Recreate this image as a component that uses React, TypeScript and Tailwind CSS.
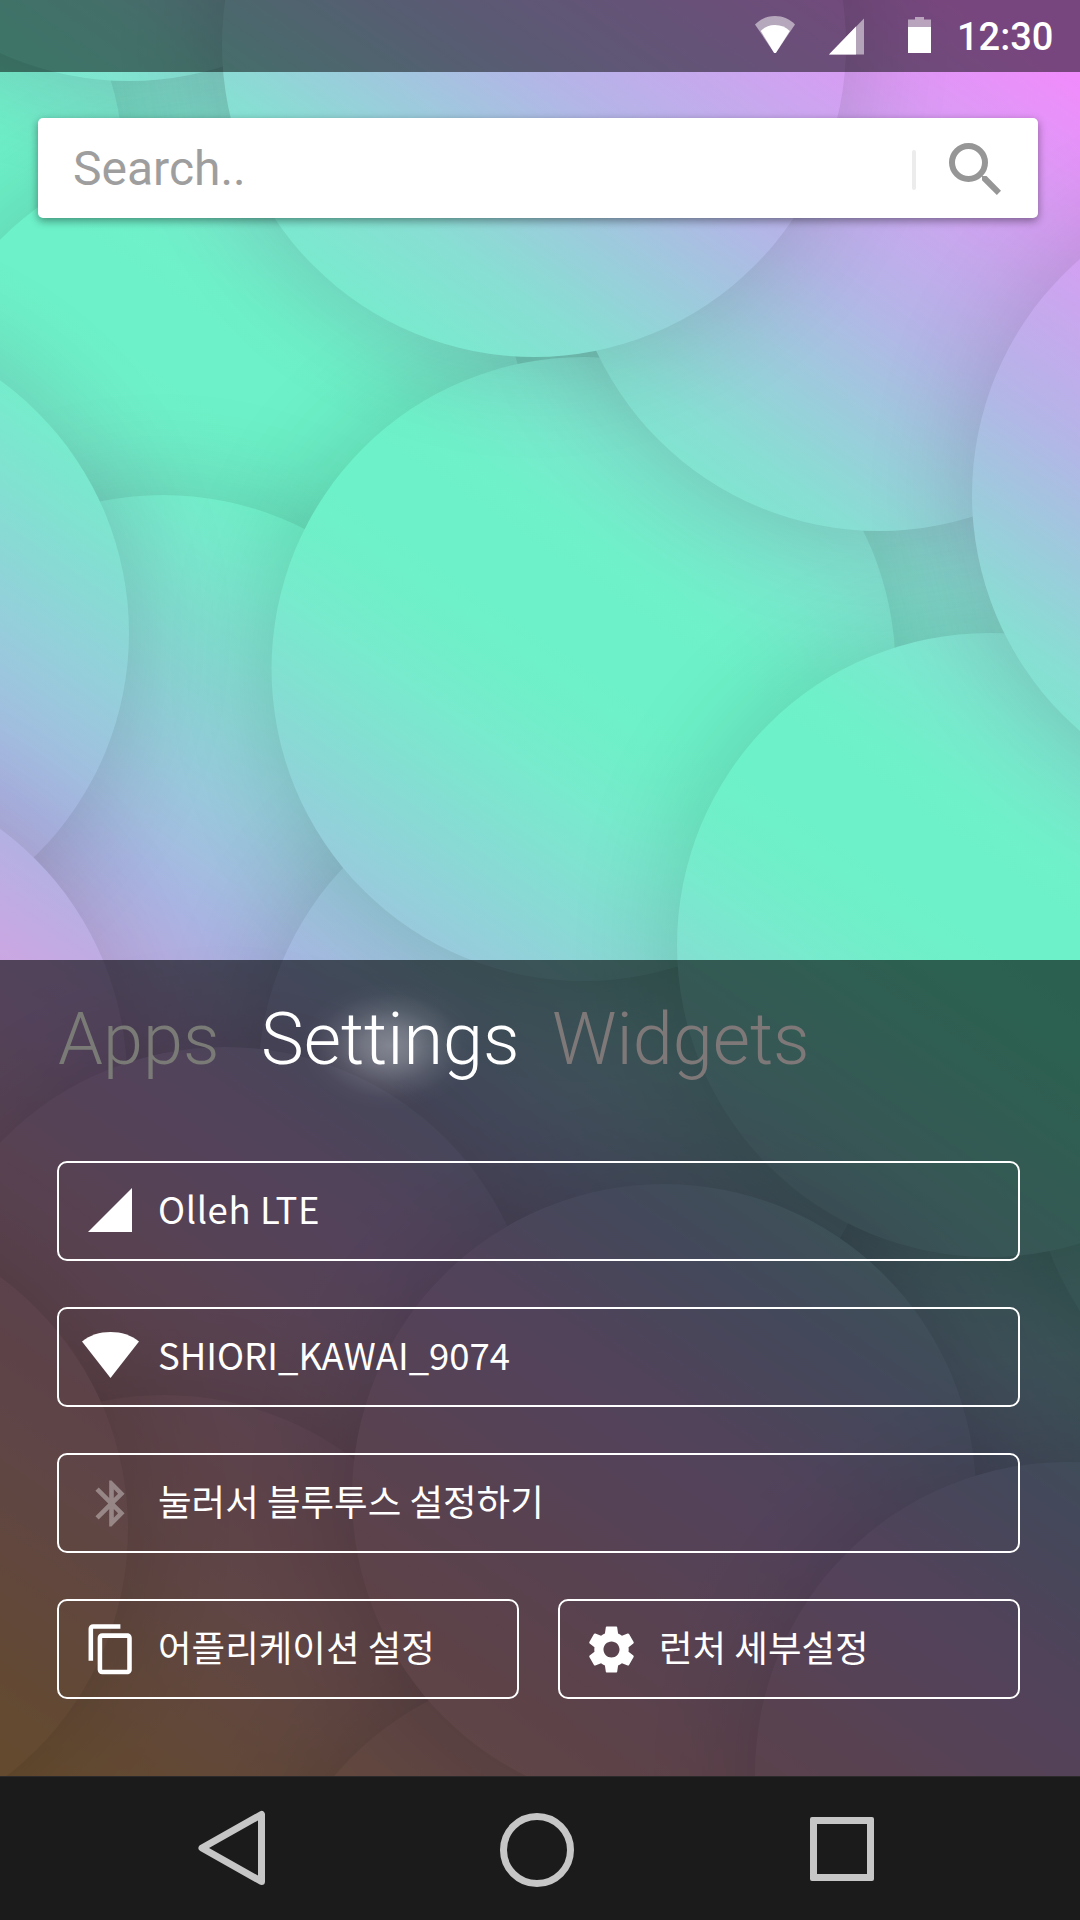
import React from "react";
import { MdBluetooth, MdContentCopy } from "react-icons/md";

const KR = "font-['Noto_Sans_CJK_KR',sans-serif]";

// Wallpaper discs, back to front.
const DISCS: [number, number][] = [
  [-188, 170],
  [221, 460],
  [129, -231],
  [163, 807],
  [1069, 1319],
  [1341, 1140],
  [570, 1082],
  [583.5, 669],
  [879, 219],
  [534, 45],
  [989, 945],
  [1284, 495],
  [-183, 633],
  [-185, 1080],
  [225, 1359],
  [164, 1707],
  [-184, 1529],
  [572, 1978],
  [664, 1496],
  [1067, 1774],
];

const STOPS: [number, string][] = [
  [-662, "#f08cfc"],
  [-300, "#b4b5e7"],
  [-65, "#88ded3"],
  [33, "#7ce8cf"],
  [130, "#6ff0c9"],
  [180, "#6df1c8"],
  [260, "#6df1c8"],
  [330, "#70efc9"],
  [400, "#78eacd"],
  [484, "#82e0d1"],
  [620, "#95cedb"],
  [780, "#a9b5e2"],
  [936, "#c8a8e2"],
  [1000, "#d0a6e2"],
  [1300, "#e6a5b8"],
  [1450, "#efaeab"],
  [1700, "#f8b87c"],
  [1800, "#fbbb70"],
];

function Wallpaper() {
  return (
    <svg className="absolute inset-0" width="1080" height="1920" viewBox="0 0 1080 1920" aria-hidden="true">
      <defs>
        <linearGradient id="sky" gradientUnits="userSpaceOnUse" x1="0" y1="-700" x2="-1168.6" y2="993.6">
          {STOPS.map(([t, c]) => (
            <stop key={t} offset={(t + 700) / 2500} stopColor={c} />
          ))}
        </linearGradient>
        <filter id="soft" x="-40%" y="-40%" width="180%" height="180%">
          <feGaussianBlur stdDeviation="58" />
        </filter>
      </defs>
      <rect width="1080" height="1920" fill="url(#sky)" />
      {DISCS.map(([x, y], i) => (
        <g key={i}>
          <circle cx={x} cy={y} r="312" fill="#000" opacity="0.15" filter="url(#soft)" />
          <circle cx={x} cy={y} r="312" fill="url(#sky)" />
        </g>
      ))}
    </svg>
  );
}

function StatusBar() {
  return (
    <header className="flex h-[72px] w-full items-start bg-black/50 pl-[755px] text-white">
      <svg className="mt-4" width="40" height="37" viewBox="0 0 40 37">
        <path d="M0 8.5C5 3.2 12 0 20 0s15 3.2 20 8.5L20.8 37h-1.6z" fill="#fff" fillOpacity=".5" />
        <path d="M5.8 15C9.5 11 14 9 20 9S31 11 34.8 15L20.8 37h-1.6z" fill="#fff" />
      </svg>
      <svg className="mt-[18px] ml-[34px]" width="35" height="37" viewBox="0 0 35 37">
        <path d="M0 36.5L35 .5v36z" fill="#fff" fillOpacity=".5" />
        <path d="M0 36.5L27 8.5v28z" fill="#fff" />
      </svg>
      <svg className="mt-[17px] ml-11" width="23" height="36" viewBox="0 0 23 36">
        <path d="M0 2.5h7V0h9v2.5h7V10H0z" fill="#fff" fillOpacity=".5" />
        <path d="M0 10h23v26H0z" fill="#fff" />
      </svg>
      <span className="mt-[15px] ml-[26px] font-[Roboto] text-[38px] leading-[45px] font-medium">12:30</span>
    </header>
  );
}

function SearchBar() {
  return (
    <div className="mt-[46px] ml-[38px] flex h-[100px] w-[1000px] items-center rounded-[5px] bg-white pl-[35px] shadow-[0_3px_9px_rgba(0,0,0,0.4)]">
      <span className="w-[839px] pt-0.5 font-[Roboto] text-[48px] leading-[56px] text-[#9e9e9e]">Search..</span>
      <span className="mt-1 h-10 w-1 rounded-full bg-[#ececec]" />
      <svg className="mt-1 ml-[33px]" width="52" height="54" viewBox="0 0 52 54" fill="none" stroke="#969696">
        <circle cx="19.5" cy="19.5" r="16.5" strokeWidth="6" />
        <path d="M33 33h4.5l14.5 14.7-4.2 4.3L33 37.3z" fill="#969696" stroke="none" />
      </svg>
    </div>
  );
}

function Tabs() {
  return (
    <nav className="relative flex h-[201px] pt-[38px] font-[Roboto] text-[72px] leading-[84px] font-light">
      <span className="absolute top-[22px] left-[300px] h-[128px] w-[178px] bg-[radial-gradient(closest-side,rgba(255,255,255,0.34),rgba(255,255,255,0.26)_28%,rgba(255,255,255,0.1)_58%,rgba(255,255,255,0.02)_82%,transparent)]" />
      <span className="relative ml-[58px] w-[203px] text-[#7a7a76]">Apps</span>
      <span className="relative w-[291px] text-white">Settings</span>
      <span className="relative text-[#7e7878]">Widgets</span>
    </nav>
  );
}

function Row({ icon, label, className = "" }: { icon: React.ReactNode; label: string; className?: string }) {
  return (
    <div className={`flex h-[100px] items-center rounded-[10px] border-2 border-white text-white ${className}`}>
      <span className="flex h-full w-[99px] shrink-0 items-center justify-center pl-[3px]">{icon}</span>
      <span className={`pb-[5px] text-[36.5px] leading-[54px] whitespace-nowrap ${KR}`}>{label}</span>
    </div>
  );
}

const signal = (
  <svg className="-mt-[2px]" width="44" height="44" viewBox="0 0 44 44" fill="#fff">
    <path d="M0 44L44 0v44z" />
  </svg>
);

const wifi = (
  <svg className="-mt-[5px] ml-px" width="57" height="46" viewBox="0 0 57 46" fill="#fff">
    <path d="M0 9.5C8 3 17.500 0 28.500 0S49 3 57 9.500L28.500 46z" />
  </svg>
);

const gear = (
  <svg width="55" height="55" viewBox="0 0 24 24" fill="#fff">
    <path d="M19.430 12.980c.04-.32.07-.64.07-.98s-.03-.66-.07-.98l2.110-1.650c.19-.15.24-.42.12-.64l-2-3.460c-.12-.22-.39-.3-.61-.22l-2.490 1c-.52-.4-1.080-.73-1.690-.98l-.38-2.650C14.460 2.180 14.250 2 14 2h-4c-.25 0-.46.18-.49.42l-.38 2.650c-.61.25-1.170.59-1.690.98l-2.490-1c-.23-.09-.49 0-.61.22l-2 3.460c-.13.22-.07.49.12.64l2.110 1.650c-.04.32-.07.65-.07.98s.03.66.07.98l-2.110 1.650c-.19.15-.24.42-.12.64l2 3.460c.12.22.39.3.61.22l2.490-1c.52.4 1.080.73 1.690.98l.38 2.650c.03.24.24.42.49.42h4c.25 0 .46-.18.49-.42l.38-2.650c.61-.25 1.170-.59 1.690-.98l2.490 1c.23.09.49 0 .61-.22l2-3.460c.12-.22.07-.49-.12-.64l-2.110-1.650zM12 15.500c-1.930 0-3.500-1.570-3.500-3.500s1.570-3.500 3.500-3.500 3.500 1.570 3.500 3.500-1.570 3.500-3.500 3.500z" />
  </svg>
);

function Panel() {
  return (
    <section className="mt-auto h-[816px] w-full bg-black/60">
      <Tabs />
      <div className="ml-[57px] flex w-[963px] flex-col gap-[46px]">
        <Row className="tracking-[0.6px]" icon={signal} label="Olleh LTE" />
        <Row icon={wifi} label="SHIORI_KAWAI_9074" />
        <Row icon={<MdBluetooth size={55} className="ml-[2px] opacity-35" />} label="눌러서 블루투스 설정하기" />
        <div className="flex justify-between">
          <Row className="w-[462px]" icon={<MdContentCopy size={54.6} className="ml-[2px]" />} label="어플리케이션 설정" />
          <Row className="w-[462px]" icon={gear} label="런처 세부설정" />
        </div>
      </div>
    </section>
  );
}

function NavBar() {
  return (
    <footer className="flex h-36 w-full border-t border-[#2c2a2b] bg-[#1b1b1b] pl-[198px]">
      <svg className="mt-[33px]" width="68" height="77" viewBox="0 0 68 77" fill="none" stroke="#c6c6c6" strokeWidth="7" strokeLinejoin="round">
        <path d="M63.500 4.500v67L4 38z" />
      </svg>
      <span className="mt-[36px] ml-[234px] h-[74px] w-[74px] rounded-full border-[7px] border-[#c6c6c6]" />
      <span className="mt-[40px] ml-[236px] h-16 w-16 rounded-[2px] border-[7px] border-[#c6c6c6]" />
    </footer>
  );
}

export default function App() {
  return (
    <div className="relative h-[1920px] w-[1080px] overflow-hidden">
      <Wallpaper />
      <div className="relative flex h-full flex-col">
        <StatusBar />
        <SearchBar />
        <Panel />
        <NavBar />
      </div>
    </div>
  );
}
